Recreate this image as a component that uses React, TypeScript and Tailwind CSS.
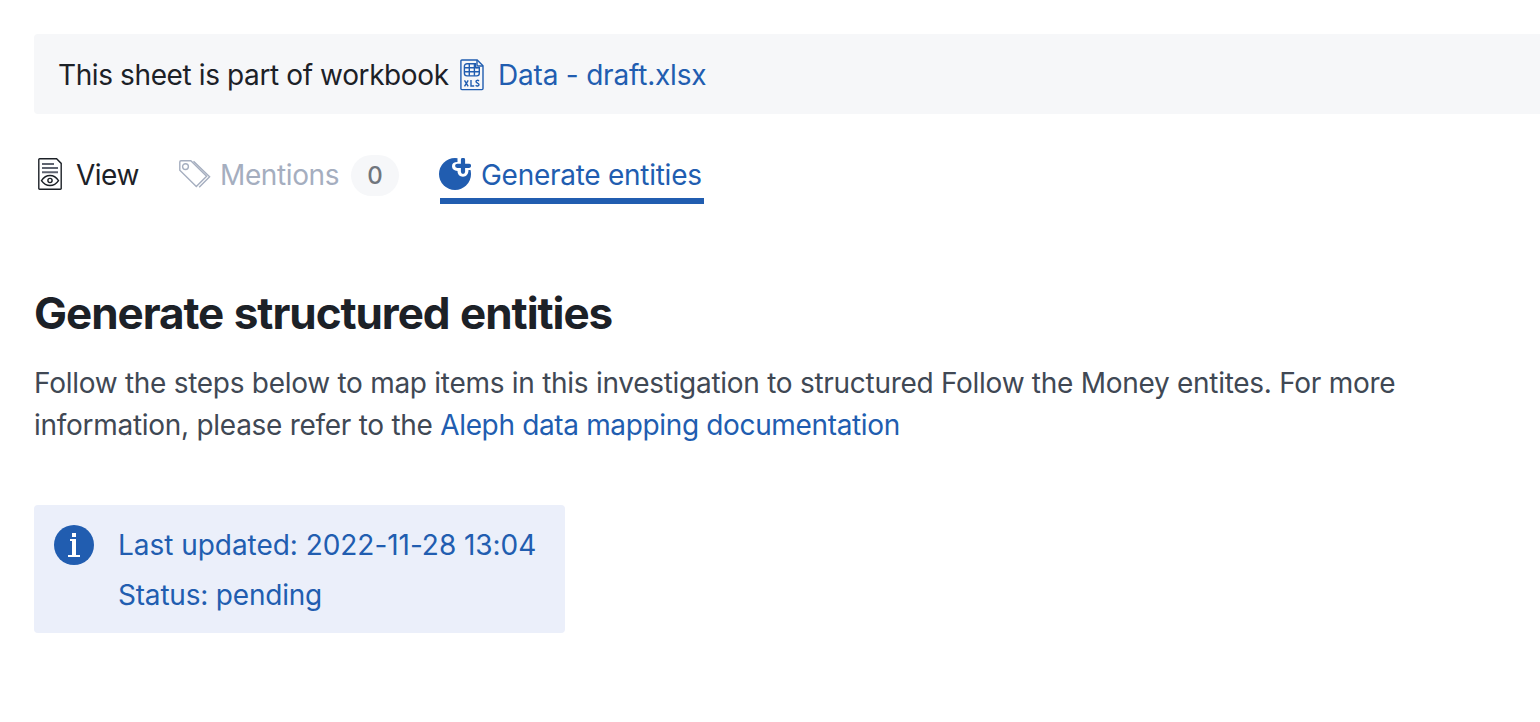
function SheetIcon() {
  return (
    <svg width="24" height="32" viewBox="0 0 24 32" fill="none" stroke="#215db0" strokeWidth="1.4" className="shrink-0">
      <path d="M1.9 1h15.3L23 6.8v22.8a1 1 0 0 1-1 1H1.9a1 1 0 0 1-1-1V2a1 1 0 0 1 1-1Z" />
      <path d="M17 1v5a1 1 0 0 0 1 1h5" />
      <path d="M7 4.700h8.500v2.200a1.800 1.800 0 0 0 1.800 1.800h2v5.600a2.600 2.600 0 0 1-2.600 2.600H7a2.600 2.600 0 0 1-2.600-2.600v-7A2.600 2.600 0 0 1 7 4.700Z" />
      <path d="M4.400 8.700h13M4.400 12.700h15M9.300 4.700v12M14.400 4.700v12" />
      <path d="M4.500 21.300l3.700 6M8.200 21.300l-3.700 6M11 21v6h3.200M19 21.900c-1-.9-3-.8-3 .7 0 1.600 3 1.300 3 3 0 1.600-2.300 1.800-3.300.6" />
    </svg>
  );
}

function ViewIcon() {
  return (
    <svg width="24" height="32" viewBox="0 0 24 32" fill="none" stroke="#1c2127" strokeWidth="1.4" className="shrink-0">
      <path d="M1.600 .8h17L23.200 5.400v25a.8.8 0 0 1-.8.8H1.600a.8.8 0 0 1-.8-.8V1.600a.8.8 0 0 1 .8-.8Z" />
      <path d="M4 6h12M4 10h16M4 14.200h16" stroke="#5f6470" strokeWidth="2" />
      <path d="M3.500 22.600C8 15.800 16 15.800 20.500 22.600C16 29.200 8 29.200 3.500 22.600Z" />
      <circle cx="12" cy="22.500" r="2.100" />
    </svg>
  );
}

function TagIcon() {
  return (
    <svg width="32" height="32" viewBox="0 0 32 32" fill="none" stroke="#a5aebf" strokeWidth="1.4" className="shrink-0">
      <path d="M2 2.700h9.800L27.600 18.300 17.300 28.600 .8 12.200V3.900A1.200 1.200 0 0 1 2 2.700Z" />
      <path d="M14.500 3.200 30.600 18.800 20.200 29.200" />
      <circle cx="6.500" cy="8.600" r="2.900" />
    </svg>
  );
}

function GenerateIcon() {
  return (
    <svg width="32" height="32" viewBox="0 0 32 32" className="shrink-0">
      <circle cx="16" cy="16" r="16" fill="#215db0" />
      <path d="M18.500 0H32v12h-2.500c0 4-2.200 6.700-5.500 6.700-3.300 0-5.500-2.200-5.500-5.700-3.500-.2-5.500-2-5.500-4.800S15 4 18.500 4Z" fill="white" />
      <path d="M24 1.800v12M18.200 7.800H30" stroke="#215db0" strokeWidth="4.200" strokeLinecap="round" />
    </svg>
  );
}

function InfoIcon() {
  return (
    <svg width="40" height="40" viewBox="0 0 40 40" className="shrink-0">
      <circle cx="20" cy="20" r="20" fill="#215db0" />
      <path d="M18 8h4v4h-4ZM16 14h6v16h4v2H14v-2h4V16h-2Z" fill="white" />
    </svg>
  );
}

export default function App() {
  return (
    <main className="h-[722px] overflow-hidden bg-white pt-[34px] pl-[34px] font-['Inter',sans-serif] text-[28px] leading-[42px] text-[#1c2127]">
      <div className="flex h-20 items-center rounded-l-[4px] bg-[#f6f7f9] pt-[2px] pl-6 whitespace-nowrap">
        <span className="w-[402px] tracking-[-0.39px]">This sheet is part of workbook</span>
        <SheetIcon />
        <a className="ml-[14px] tracking-[-0.2px] text-[#215db0]">Data - draft.xlsx</a>
      </div>

      <nav className="mt-8 flex h-[58px] whitespace-nowrap">
        <div className="flex h-14 w-[145px] items-center pl-1">
          <ViewIcon />
          <span className="ml-[14px] pt-px tracking-[-0.5px]">View</span>
        </div>
        <div className="flex h-14 w-[261px] items-center text-[#a5aebf]">
          <TagIcon />
          <span className="ml-[9px] w-[131px] pt-px tracking-[-0.38px]">Mentions</span>
          <span className="mt-[3px] flex h-[41px] w-12 items-center justify-center rounded-full bg-[#f6f7f9] pt-px text-[24px] font-medium text-[#70757d]">0</span>
        </div>
        <div className="flex h-[58px] w-[264px] items-center border-b-[6px] border-[#215db0] pt-1 text-[#215db0]">
          <div className="-ml-px flex items-center">
            <GenerateIcon />
            <span className="ml-[10px] pt-px tracking-[-0.27px]">Generate entities</span>
          </div>
        </div>
      </nav>

      <h1 className="mt-[83px] text-[44px] leading-[52px] font-bold tracking-[-1.05px] [word-spacing:1.2px] whitespace-nowrap">Generate structured entities</h1>
      <p className="mt-[23px] tracking-[-0.28px] text-[#404854] whitespace-nowrap">
        Follow the steps below to map items in this investigation to structured Follow the Money entites. For more
        <br />
        information, please refer to the <a className="tracking-[-0.35px] text-[#215db0]">Aleph data mapping documentation</a>
      </p>

      <section className="mt-[59px] flex h-32 w-[531px] items-start gap-6 rounded-[4px] bg-[#ebeffa] px-5 pt-5 whitespace-nowrap text-[#215db0]">
        <InfoIcon />
        <div className="-mt-px flex flex-col gap-2">
          <p className="tracking-[-0.04px]">Last updated: 2022-11-28 13:04</p>
          <p className="tracking-[-0.2px]">Status: pending</p>
        </div>
      </section>
    </main>
  );
}
